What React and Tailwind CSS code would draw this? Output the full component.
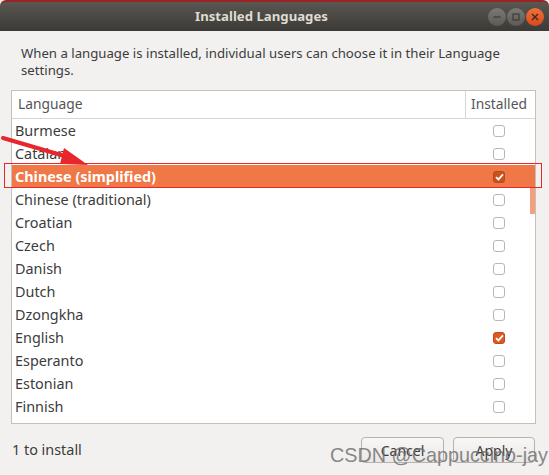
import React from 'react';

const languages = [
  { name: 'Burmese' },
  { name: 'Catalan' },
  { name: 'Chinese (simplified)', checked: true, selected: true },
  { name: 'Chinese (traditional)' },
  { name: 'Croatian' },
  { name: 'Czech' },
  { name: 'Danish' },
  { name: 'Dutch' },
  { name: 'Dzongkha' },
  { name: 'English', checked: true },
  { name: 'Esperanto' },
  { name: 'Estonian' },
  { name: 'Finnish' },
];

function CheckBox({ checked, selected }) {
  if (checked) {
    return (
      <span
        className={
          'flex h-[12px] w-[12px] items-center justify-center rounded-[3px] border ' +
          (selected ? 'border-[#b8491c] bg-[#c9521f]' : 'border-[#c04a18] bg-[#dd5a22]')
        }
      >
        <svg width="9" height="8" viewBox="0 0 9 8">
          <path d="M1 4.2 L3.4 6.4 L8 1.4" fill="none" stroke="#fff" strokeWidth="1.8" />
        </svg>
      </span>
    );
  }
  return <span className="block h-[12px] w-[12px] rounded-[3px] border border-[#b9b6b2] bg-white" />;
}

function TitleButton({ kind }) {
  if (kind === 'close') {
    return (
      <span className="flex h-[18px] w-[18px] items-center justify-center rounded-full bg-gradient-to-b from-[#f0713a] to-[#d9481a]">
        <svg width="8" height="8" viewBox="0 0 8 8">
          <path d="M1 1 L7 7 M7 1 L1 7" stroke="#3b2a22" strokeWidth="1.4" />
        </svg>
      </span>
    );
  }
  return (
    <span className="flex h-[18px] w-[18px] items-center justify-center rounded-full bg-gradient-to-b from-[#7d7a74] to-[#5c5a55]">
      <svg width="10" height="10" viewBox="0 0 10 10">
        {kind === 'min' ? (
          <path d="M1.5 5 H8.5" stroke="#3a3935" strokeWidth="1.2" />
        ) : (
          <rect x="2" y="2" width="6" height="6" fill="none" stroke="#3a3935" strokeWidth="1.1" />
        )}
      </svg>
    </span>
  );
}

export default function App() {
  return (
    <div
      className="relative h-[475px] w-[549px] overflow-hidden bg-[#f2f1f0] text-[#3c3c3c]"
      style={{ fontFamily: '"Noto Sans", "Open Sans", sans-serif' }}
    >
      {/* title bar */}
      <div className="relative flex h-[31px] items-center justify-center rounded-t-[6px] border-t-2 border-[#9c2226] bg-gradient-to-b from-[#5a5751] to-[#3b3a36] pr-[26px]">
        <span className="text-[13.2px] font-bold text-[#dfdbd2]">Installed Languages</span>
        <div className="absolute right-[5px] top-[6px] flex gap-[1px]">
          <TitleButton kind="min" />
          <TitleButton kind="max" />
          <TitleButton kind="close" />
        </div>
      </div>

      <p className="px-[21px] pt-[14px] text-[13.2px] leading-[17px]">
        When a language is installed, individual users can choose it in their Language settings.
      </p>

      {/* list */}
      <div className="ml-[11px] mt-[11px] h-[334px] w-[525px] overflow-hidden border border-[#c4c1bc] bg-white">
        <div className="flex h-[28px] border-b border-[#d8d6d2] text-[13.8px] text-[#555]">
          <div className="flex flex-1 items-center border-r border-[#d8d6d2] pl-[6px]">Language</div>
          <div className="flex w-[69px] items-center pl-[5px]">Installed</div>
        </div>
        <div className="relative">
          {languages.map((l) => (
            <div
              key={l.name}
              className={
                'flex h-[23px] items-center text-[14.4px] ' +
                (l.selected ? 'bg-[#f07746] font-bold text-white' : '')
              }
            >
              <div className="flex-1 pl-[3px]">{l.name}</div>
              <div className="flex w-[69px] justify-center pr-[3px]">
                <CheckBox checked={l.checked} selected={l.selected} />
              </div>
            </div>
          ))}
          <div className="absolute right-0 top-[69px] h-[26px] w-[5px] bg-[#f4a07c]" />
        </div>
      </div>

      {/* footer */}
      <div className="flex items-center justify-between pl-[12px] pr-[14px] pt-[13px]">
        <span className="text-[14.4px]">1 to install</span>
        <div className="flex gap-[9px]">
          <button className="h-[26px] w-[83px] rounded-[4px] border border-[#b6b3ae] bg-gradient-to-b from-[#f8f7f6] to-[#ebe9e7] text-[14px] text-[#3c3c3c]">
            Cancel
          </button>
          <button className="h-[26px] w-[82px] rounded-[4px] border border-[#b6b3ae] bg-gradient-to-b from-[#f8f7f6] to-[#ebe9e7] text-[14px] text-[#3c3c3c]">
            Apply
          </button>
        </div>
      </div>

      {/* annotation */}
      <div className="pointer-events-none absolute left-[4px] top-[163px] h-[25px] w-[538px] border border-[#e8262b]" />
      <svg className="pointer-events-none absolute left-0 top-0" width="549" height="475">
        <path d="M3 138 L68 157" stroke="#e8262b" strokeWidth="4" strokeLinecap="round" />
        <path d="M88 165 L64 148 L60 164 Z" fill="#e8262b" />
      </svg>
      <div
        className="pointer-events-none absolute left-[330px] top-[444px] text-[19.8px] leading-[22px] text-[#6d6d6d] opacity-80"
        style={{ fontFamily: '"Liberation Sans", Arial, sans-serif' }}
      >
        CSDN @Cappuccino-jay
      </div>
    </div>
  );
}
